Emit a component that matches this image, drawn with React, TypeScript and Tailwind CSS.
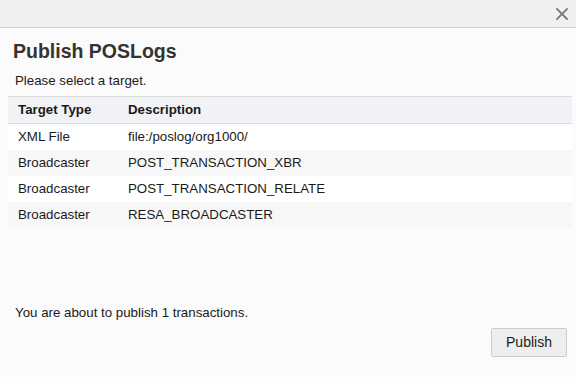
const rows = [
  { type: "XML File", desc: "file:/poslog/org1000/" },
  { type: "Broadcaster", desc: "POST_TRANSACTION_XBR" },
  { type: "Broadcaster", desc: "POST_TRANSACTION_RELATE" },
  { type: "Broadcaster", desc: "RESA_BROADCASTER" },
];

const App = () => {
  return (
    <div className="flex flex-col w-[576px] h-[377px] bg-[#fbfbfb] text-[#1a1a1a] font-['Liberation_Sans',Arial,sans-serif] overflow-hidden">
      <header className="flex items-center justify-end h-7 shrink-0 bg-[#f0f0f0] border-b border-[#cfcfcf] pr-2">
        <button className="flex items-center justify-center w-3 h-3" aria-label="Close">
          <svg width="12" height="12" viewBox="0 0 12 12">
            <path d="M1 1 L11 11 M11 1 L1 11" stroke="#7a7a7a" strokeWidth="1.8" strokeLinecap="square" />
          </svg>
        </button>
      </header>
      <main className="flex flex-col flex-1">
        <h1 className="mt-[11px] ml-[13px] text-[19.5px] leading-6 font-bold text-[#333]">Publish POSLogs</h1>
        <p className="mt-[10px] ml-[15px] text-[13.3px] leading-4">Please select a target.</p>
        <table className="mt-[7px] mx-2 w-[564px] text-[13.3px] border-collapse">
          <thead>
            <tr className="h-[27px] bg-[#f1f2f6] border-y border-[#dcdcdc]">
              <th className="w-[120px] pl-[10px] text-left font-bold">Target Type</th>
              <th className="text-left font-bold">Description</th>
            </tr>
          </thead>
          <tbody>
            {rows.map((row, index) => (
              <tr key={index} className={index % 2 === 0 ? "h-[26px] bg-white" : "h-[26px] bg-[#f7f7f7]"}>
                <td className="pl-[10px]">{row.type}</td>
                <td>{row.desc}</td>
              </tr>
            ))}
          </tbody>
        </table>
        <p className="mt-auto ml-[15px] text-[13.3px] leading-4">You are about to publish 1 transactions.</p>
        <div className="flex justify-end mt-[7px] mb-5 pr-[9px]">
          <button className="w-[76px] h-[29px] bg-[#eeeeee] border border-[#cccccc] rounded-[2px] text-[14px]">
            Publish
          </button>
        </div>
      </main>
    </div>
  );
};

export default App;
